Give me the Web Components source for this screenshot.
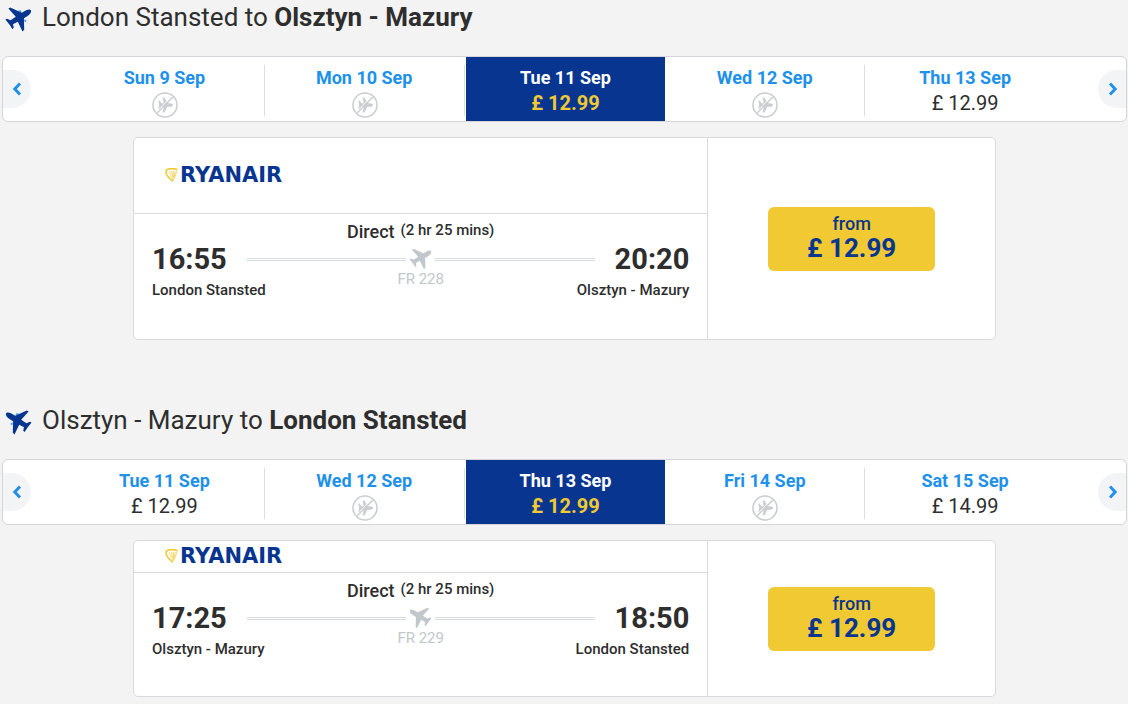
<!DOCTYPE html>
<html lang="en">
<head>
<meta charset="utf-8">
<meta name="viewport" content="width=device-width, initial-scale=1">
<title>Select flights</title>
<style>
  body { margin: 0; background: #f3f3f3; color: #2e2e2e; font-family: Roboto, "Liberation Sans", sans-serif; }
</style>
</head>
<body>
<flight-list>
  <flight-journey>
    <journey-title slot="title">London Stansted to <b>Olsztyn - Mazury</b></journey-title>
    <date-strip slot="dates">
      <date-tab day="Sun 9 Sep"></date-tab>
      <date-tab day="Mon 10 Sep"></date-tab>
      <date-tab day="Tue 11 Sep" price="£ 12.99" selected></date-tab>
      <date-tab day="Wed 12 Sep"></date-tab>
      <date-tab day="Thu 13 Sep" price="£ 12.99"></date-tab>
    </date-strip>
    <flight-card roomy number="FR 228" depart="16:55" arrive="20:20" from="London Stansted" to="Olsztyn - Mazury" price="£ 12.99"></flight-card>
  </flight-journey>
  <flight-journey>
    <journey-title slot="title" inbound>Olsztyn - Mazury to <b>London Stansted</b></journey-title>
    <date-strip slot="dates">
      <date-tab day="Tue 11 Sep" price="£ 12.99"></date-tab>
      <date-tab day="Wed 12 Sep"></date-tab>
      <date-tab day="Thu 13 Sep" price="£ 12.99" selected></date-tab>
      <date-tab day="Fri 14 Sep"></date-tab>
      <date-tab day="Sat 15 Sep" price="£ 14.99"></date-tab>
    </date-strip>
    <flight-card inbound number="FR 229" depart="17:25" arrive="18:50" from="Olsztyn - Mazury" to="London Stansted" price="£ 12.99"></flight-card>
  </flight-journey>
</flight-list>
<script>
const define = (name, render) => customElements.define(name, class extends HTMLElement {
  constructor() { super(); this.attachShadow({ mode: "open" }); }
  connectedCallback() {
    this.shadowRoot.innerHTML = render(this, key => this.getAttribute(key) || "");
  }
});

define("plane-icon", el => `
  <style>
    :host { display: block; flex: none; }
    svg { display: block; width: 100%; height: 100%; fill: currentColor; }
    .engines { fill: var(--engine, none); }
  </style>
  <svg viewBox="0 0 27 25" aria-hidden="true">
    <g ${el.hasAttribute("inbound") ? 'transform="translate(27 0) scale(-1 1)"' : ""}>
      <path class="engines" d="M13 3.6L15.8 3.2L16.6 5.6L14 5.4ZM19.4 12.2L21.6 13.4L20.8 15.2L19.2 14.6Z"/>
      <path d="M26 3.4C26.6 5 25.2 7.4 22.2 9.2L18.9 11.2L19.2 22.8L17.5 24.6L12.8 14.7L8 17.2L8.8 20.8L7.3 22L4.8 18.1L0.4 12.6L2 11.8L5.6 13.2L10.8 9.8L3.4 1.6L5.2 0.6L16.8 5.8L20.6 3.6C23.3 2.1 25.5 2 26 3.4Z"/>
    </g>
  </svg>`);

define("no-flight-icon", () => `
  <style>:host, svg { display: block; width: 26px; height: 26px; }</style>
  <svg viewBox="0 0 26 26" role="img" aria-label="No flights">
    <circle cx="13" cy="13" r="12" fill="none" stroke="#cbcdd0" stroke-width="1.6"/>
    <path d="M21 13C21 14 19.5 14.8 17.8 14.8H15.4L12.4 20.4H10.6L11.8 14.8H9.3L7.8 17.2H6.4L7.2 13L6.4 8.8H7.8L9.3 11.2H11.8L10.6 5.6H12.4L15.4 11.2H17.8C19.5 11.2 21 12 21 13Z" fill="#cbcdd0"/>
    <path d="M3.9 20.5L20.5 3.9" stroke="#fff" stroke-width="1"/>
    <path d="M4.6 21.4L21.4 4.6" stroke="#cbcdd0" stroke-width="1.4"/>
  </svg>`);

define("airline-logo", () => `
  <style>
    :host { display: flex; align-items: center; gap: 2px; padding-bottom: 2px; color: #073590; font: bold 21px/20px "DejaVu Sans", sans-serif; }
    svg { width: 13px; height: 14px; }
  </style>
  <svg viewBox="0 0 13 14" fill="none" stroke="#f1c933" aria-hidden="true">
    <path d="M12.4 1.4C9 .4 3.7.2 1.8 1.8C0 4 1.2 8.4 7.8 13.2" stroke-width="1.6"/>
    <path d="M12 2.4C10.8 6.5 9.7 10 7.8 13M4 3.2L8 11.5M6.3 2.8L8.4 10.5M8.4 2.8L8.8 9.5M10.3 3L9 9.5" stroke-width=".7"/>
  </svg>
  <span>RYANAIR</span>`);

define("journey-title", el => `
  <style>
    :host { display: block; }
    h2 { display: flex; align-items: center; gap: 10px; margin: 0; padding: 2px 3px; font-size: 26px; line-height: 30px; font-weight: 400; }
    plane-icon { width: 27px; height: 25px; color: #073590; --engine: #4ba3ee; margin-top: 4px; }
    ::slotted(b) { font-weight: 700; }
  </style>
  <h2><plane-icon ${el.hasAttribute("inbound") ? "inbound" : ""}></plane-icon><span><slot></slot></span></h2>`);

define("date-strip", () => `
  <style>
    :host { display: flex; align-items: center; box-sizing: border-box; height: 66px; overflow: hidden; background: #fff; border: 1px solid #d3d5d8; border-radius: 6px; }
    .days { flex: 1; display: flex; align-self: stretch; margin: 0 33px 0 34px; }
    .step { width: 28px; height: 38px; padding: 0; border: 0; background: #f3f4f6; display: grid; place-items: center; cursor: pointer; }
    .prev { border-radius: 0 19px 19px 0; }
    .next { border-radius: 19px 0 0 19px; }
    svg { width: 10px; height: 14px; fill: none; stroke: #2091eb; stroke-width: 3; }
  </style>
  <button class="step prev" aria-label="Earlier dates"><svg viewBox="0 0 10 14"><path d="M8 1.5L2.8 7L8 12.5"/></svg></button>
  <div class="days"><slot></slot></div>
  <button class="step next" aria-label="Later dates"><svg viewBox="0 0 10 14"><path d="M3 1.5L8.2 7L3 12.5"/></svg></button>`);

define("date-tab", (el, get) => `
  <style>
    :host { flex: 1; display: flex; align-items: center; }
    button { flex: 1; align-self: stretch; display: flex; flex-direction: column; align-items: center; padding: 9px 0 0; border: 0; background: none; font: inherit; color: inherit; cursor: pointer; }
    .day { font-size: 18px; line-height: 24px; font-weight: 700; color: #2091eb; }
    .price { font-size: 20px; line-height: 26px; }
    no-flight-icon { margin: 2px 0 0 1px; }
    i { width: 1px; height: 51px; margin-top: 2px; background: #dcdfe2; }
    :host(:last-child) i { display: none; }
    :host([selected]) { padding-left: 1px; }
    :host([selected]) button { background: #073590; }
    :host([selected]) i { display: none; }
    :host([selected]) .day { color: #fff; }
    :host([selected]) .price { color: #f1c933; font-weight: 700; }
  </style>
  <button aria-pressed="${el.hasAttribute("selected")}">
    <span class="day">${get("day")}</span>
    ${get("price") ? `<span class="price">${get("price")}</span>` : "<no-flight-icon></no-flight-icon>"}
  </button><i></i>`);

define("fare-button", () => `
  <style>
    :host { display: block; }
    button { display: block; width: 167px; height: 64px; padding: 0 0 4px; border: 0; border-radius: 6px; background: #f1c933; color: #073590; font: 500 18px/22px Roboto, "Liberation Sans", sans-serif; cursor: pointer; }
    span { display: block; }
    .fare { font-size: 26px; line-height: 26px; font-weight: 700; }
  </style>
  <button><span>from</span><span class="fare"><slot></slot></span></button>`);

define("flight-card", (el, get) => `
  <style>
    :host { display: flex; box-sizing: border-box; max-width: 863px; min-height: 157px; margin: 0 auto; background: #fff; border: 1px solid #d8dadd; border-radius: 5px; }
    :host([roomy]) { min-height: 203px; }
    .trip { flex: 2; border-right: 1px solid #d8dadd; }
    .buy { flex: 1; display: grid; place-items: center; }
    header { box-sizing: border-box; height: 32px; padding: 0 31px; display: flex; align-items: center; border-bottom: 1px solid #d8dadd; }
    :host([roomy]) header { height: 76px; }
    .info { padding: 6px 18px 0; }
    .kind { display: flex; justify-content: center; gap: 6px; font-weight: 500; font-size: 18px; line-height: 24px; }
    .kind small { font-size: 15px; line-height: 20px; }
    .route { display: flex; align-items: center; font-weight: 700; font-size: 29px; line-height: 30px; }
    .line { flex: 1; height: 1px; border: solid #d8dce0; border-width: 1px 0; margin: 0 3px 0 20px; }
    .line + plane-icon + .line { margin: 0 20px 0 3px; }
    plane-icon { width: 23px; height: 22px; color: #c2c7cc; }
    .places { display: grid; grid-template-columns: 1fr auto 1fr; font-weight: 500; font-size: 15px; line-height: 20px; }
    .places span { padding-top: 6px; }
    .places .number { padding: 0; line-height: 16px; margin-top: -3px; font-weight: 400; color: #c2c7cc; }
    .places :last-child { text-align: right; }
  </style>
  <div class="trip">
    <header><airline-logo></airline-logo></header>
    <div class="info">
      <div class="kind"><span>Direct</span><small>(2 hr 25 mins)</small></div>
      <div class="route"><time>${get("depart")}</time><span class="line"></span><plane-icon ${el.hasAttribute("inbound") ? "inbound" : ""}></plane-icon><span class="line"></span><time>${get("arrive")}</time></div>
      <div class="places"><span>${get("from")}</span><span class="number">${get("number")}</span><span>${get("to")}</span></div>
    </div>
  </div>
  <div class="buy"><fare-button>${get("price")}</fare-button></div>`);

define("flight-journey", () => `
  <style>
    :host { display: flex; flex-direction: column; }
    .dates { margin: 22px 0 15px; }
  </style>
  <slot name="title"></slot>
  <div class="dates"><slot name="dates"></slot></div>
  <div><slot></slot></div>`);

define("flight-list", () => `
  <style>
    :host { display: flex; flex-direction: column; gap: 63px; padding: 0 1px 6px 2px; }
  </style>
  <slot></slot>`);
</script>
</body>
</html>
